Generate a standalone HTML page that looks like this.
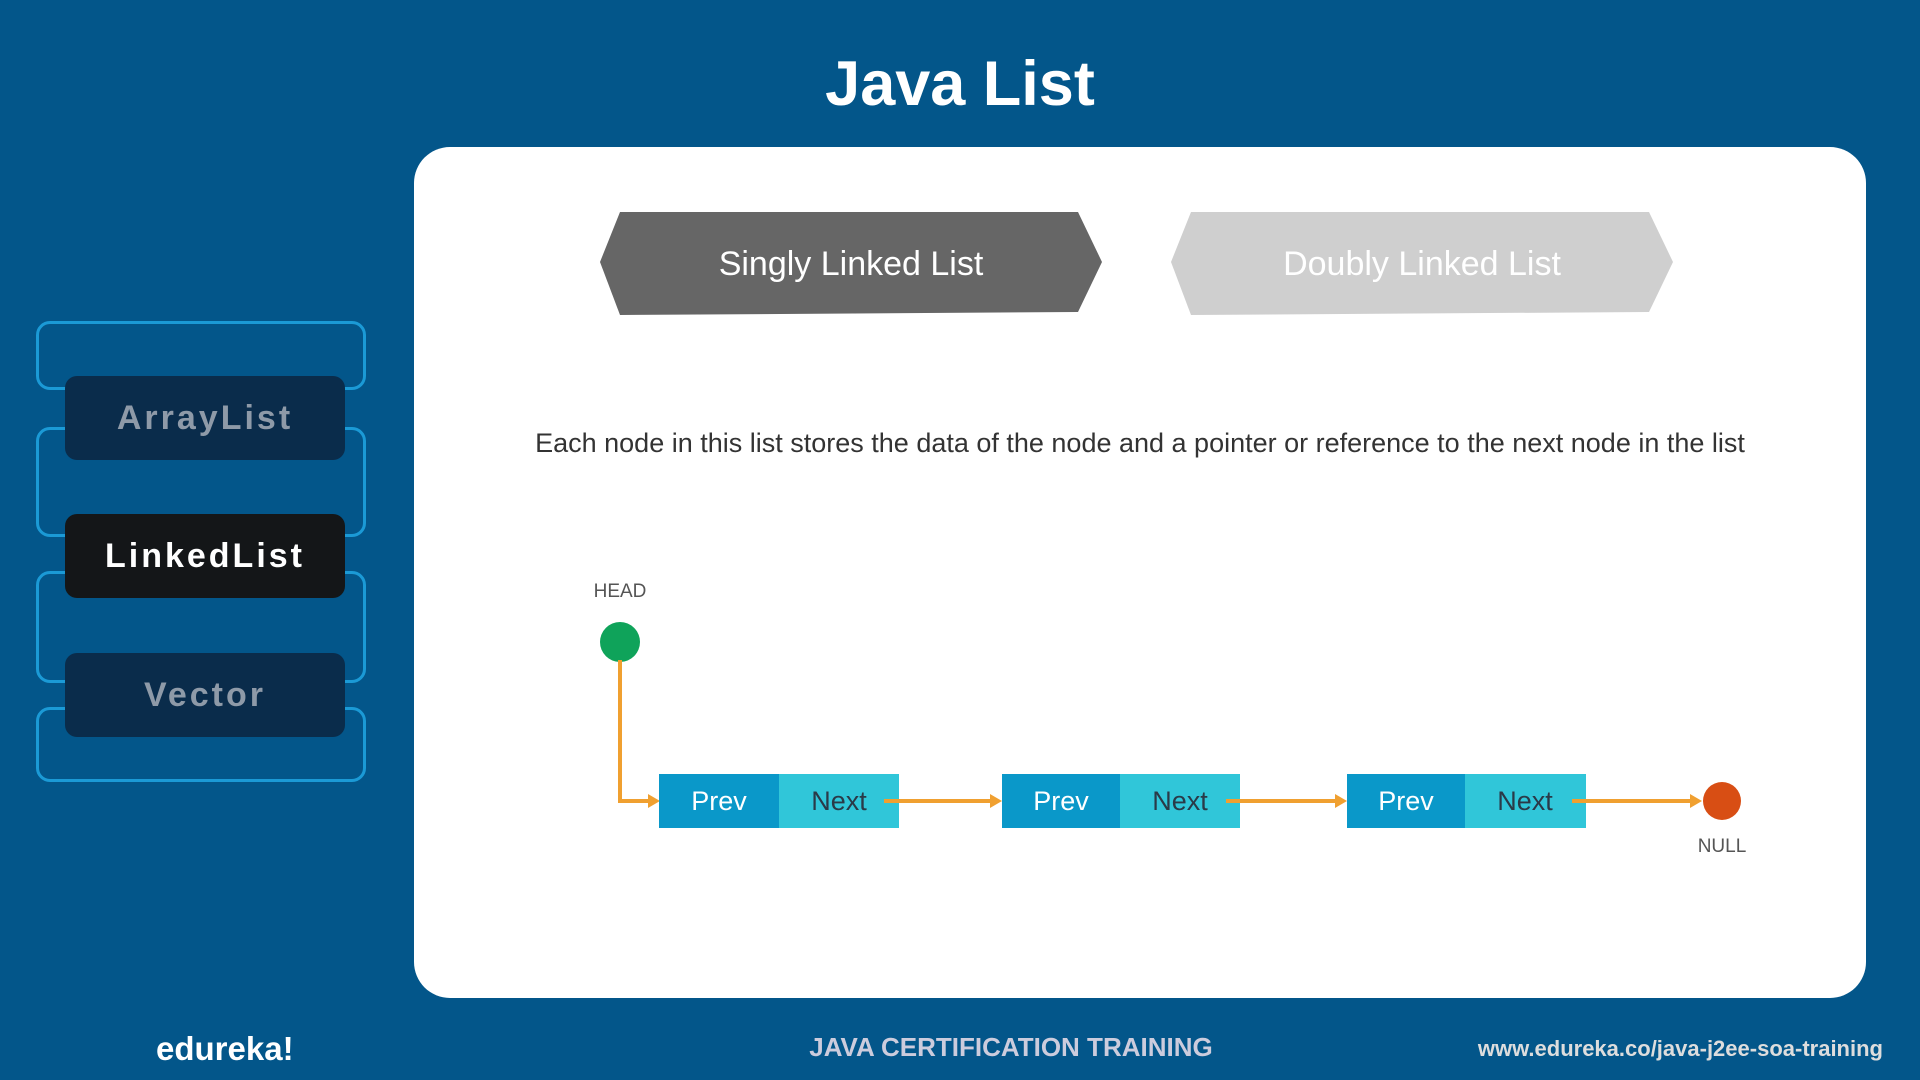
<!DOCTYPE html>
<html><head><meta charset="utf-8"><style>
body{margin:0;width:1920px;height:1080px;background:#03568a;position:relative;overflow:hidden;font-family:"Liberation Sans",sans-serif}
.abs{position:absolute}
.title{left:0;width:1920px;top:48px;text-align:center;color:#fff;font-size:63px;font-weight:bold}
.panel{left:414px;top:147px;width:1452px;height:851px;background:#fff;border-radius:36px}
.ol{left:36px;width:330px;border:3px solid #1b9ad6;border-radius:14px;box-sizing:border-box}
.pill{left:65px;width:280px;height:84px;border-radius:12px;background:#0a2c4b;color:#8e9aa8;font-size:34px;font-weight:bold;letter-spacing:3px;text-align:center;line-height:84px}
.desc{left:414px;width:1452px;top:428px;text-align:center;font-size:27px;color:#333}
.foot{color:#ddd;top:1032px}
</style></head><body>
<div class="abs title">Java List</div>
<div class="abs panel"></div>
<div class="abs ol" style="top:321px;height:69px"></div>
<div class="abs ol" style="top:427px;height:110px"></div>
<div class="abs ol" style="top:571px;height:112px"></div>
<div class="abs ol" style="top:707px;height:75px"></div>
<div class="abs pill" style="top:376px">ArrayList</div>
<div class="abs pill" style="top:514px;background:#141618;color:#fff">LinkedList</div>
<div class="abs pill" style="top:653px">Vector</div>
<svg class="abs" style="left:0;top:0" width="1920" height="1080">
<polygon points="620,212 1078,212 1102,262 1078,312 620,315 600,262" fill="#666"/>
<polygon points="1191,212 1649,212 1673,262 1649,312 1191,315 1171,262" fill="#cfcfcf"/>
<text x="851" y="275" fill="#fff" font-size="34" text-anchor="middle" font-family="Liberation Sans">Singly Linked List</text>
<text x="1422" y="275" fill="#fff" font-size="34" text-anchor="middle" font-family="Liberation Sans">Doubly Linked List</text>
<text x="620" y="597" fill="#555" font-size="19" text-anchor="middle" font-family="Liberation Sans">HEAD</text>
<circle cx="620" cy="642" r="20" fill="#0fa35a"/>
<polyline points="620,660 620,801 652,801" fill="none" stroke="#f0a030" stroke-width="4"/>
<polygon points="648,794 660,801 648,808" fill="#f0a030"/>
<g font-family="Liberation Sans" font-size="27" text-anchor="middle">
<rect x="659" y="774" width="120" height="54" fill="#0a98c9"/><rect x="779" y="774" width="120" height="54" fill="#30c6d9"/>
<text x="719" y="810" fill="#fff">Prev</text><text x="839" y="810" fill="#2a3a48">Next</text>
<rect x="1002" y="774" width="118" height="54" fill="#0a98c9"/><rect x="1120" y="774" width="120" height="54" fill="#30c6d9"/>
<text x="1061" y="810" fill="#fff">Prev</text><text x="1180" y="810" fill="#2a3a48">Next</text>
<rect x="1347" y="774" width="118" height="54" fill="#0a98c9"/><rect x="1465" y="774" width="121" height="54" fill="#30c6d9"/>
<text x="1406" y="810" fill="#fff">Prev</text><text x="1525" y="810" fill="#2a3a48">Next</text>
</g>
<g stroke="#f0a030" stroke-width="4"><line x1="884" y1="801" x2="994" y2="801"/><line x1="1226" y1="801" x2="1339" y2="801"/><line x1="1572" y1="801" x2="1692" y2="801"/></g>
<g fill="#f0a030"><polygon points="990,794 1002,801 990,808"/><polygon points="1335,794 1347,801 1335,808"/><polygon points="1690,794 1702,801 1690,808"/></g>
<circle cx="1722" cy="801" r="19" fill="#d84e14"/>
<text x="1722" y="852" fill="#555" font-size="19" text-anchor="middle" font-family="Liberation Sans">NULL</text>
</svg>
<div class="abs desc">Each node in this list stores the data of the node and a pointer or reference to the next node in the list</div>
<div class="abs foot" style="left:156px;color:#fff;font-size:33px;font-weight:bold;top:1030px">edureka!</div>
<div class="abs foot" style="left:0;width:2022px;text-align:center;font-size:26px;font-weight:bold;color:#ccd">JAVA CERTIFICATION TRAINING</div>
<div class="abs foot" style="right:37px;font-size:22px;font-weight:bold;top:1036px">www.edureka.co/java-j2ee-soa-training</div>
</body></html>
